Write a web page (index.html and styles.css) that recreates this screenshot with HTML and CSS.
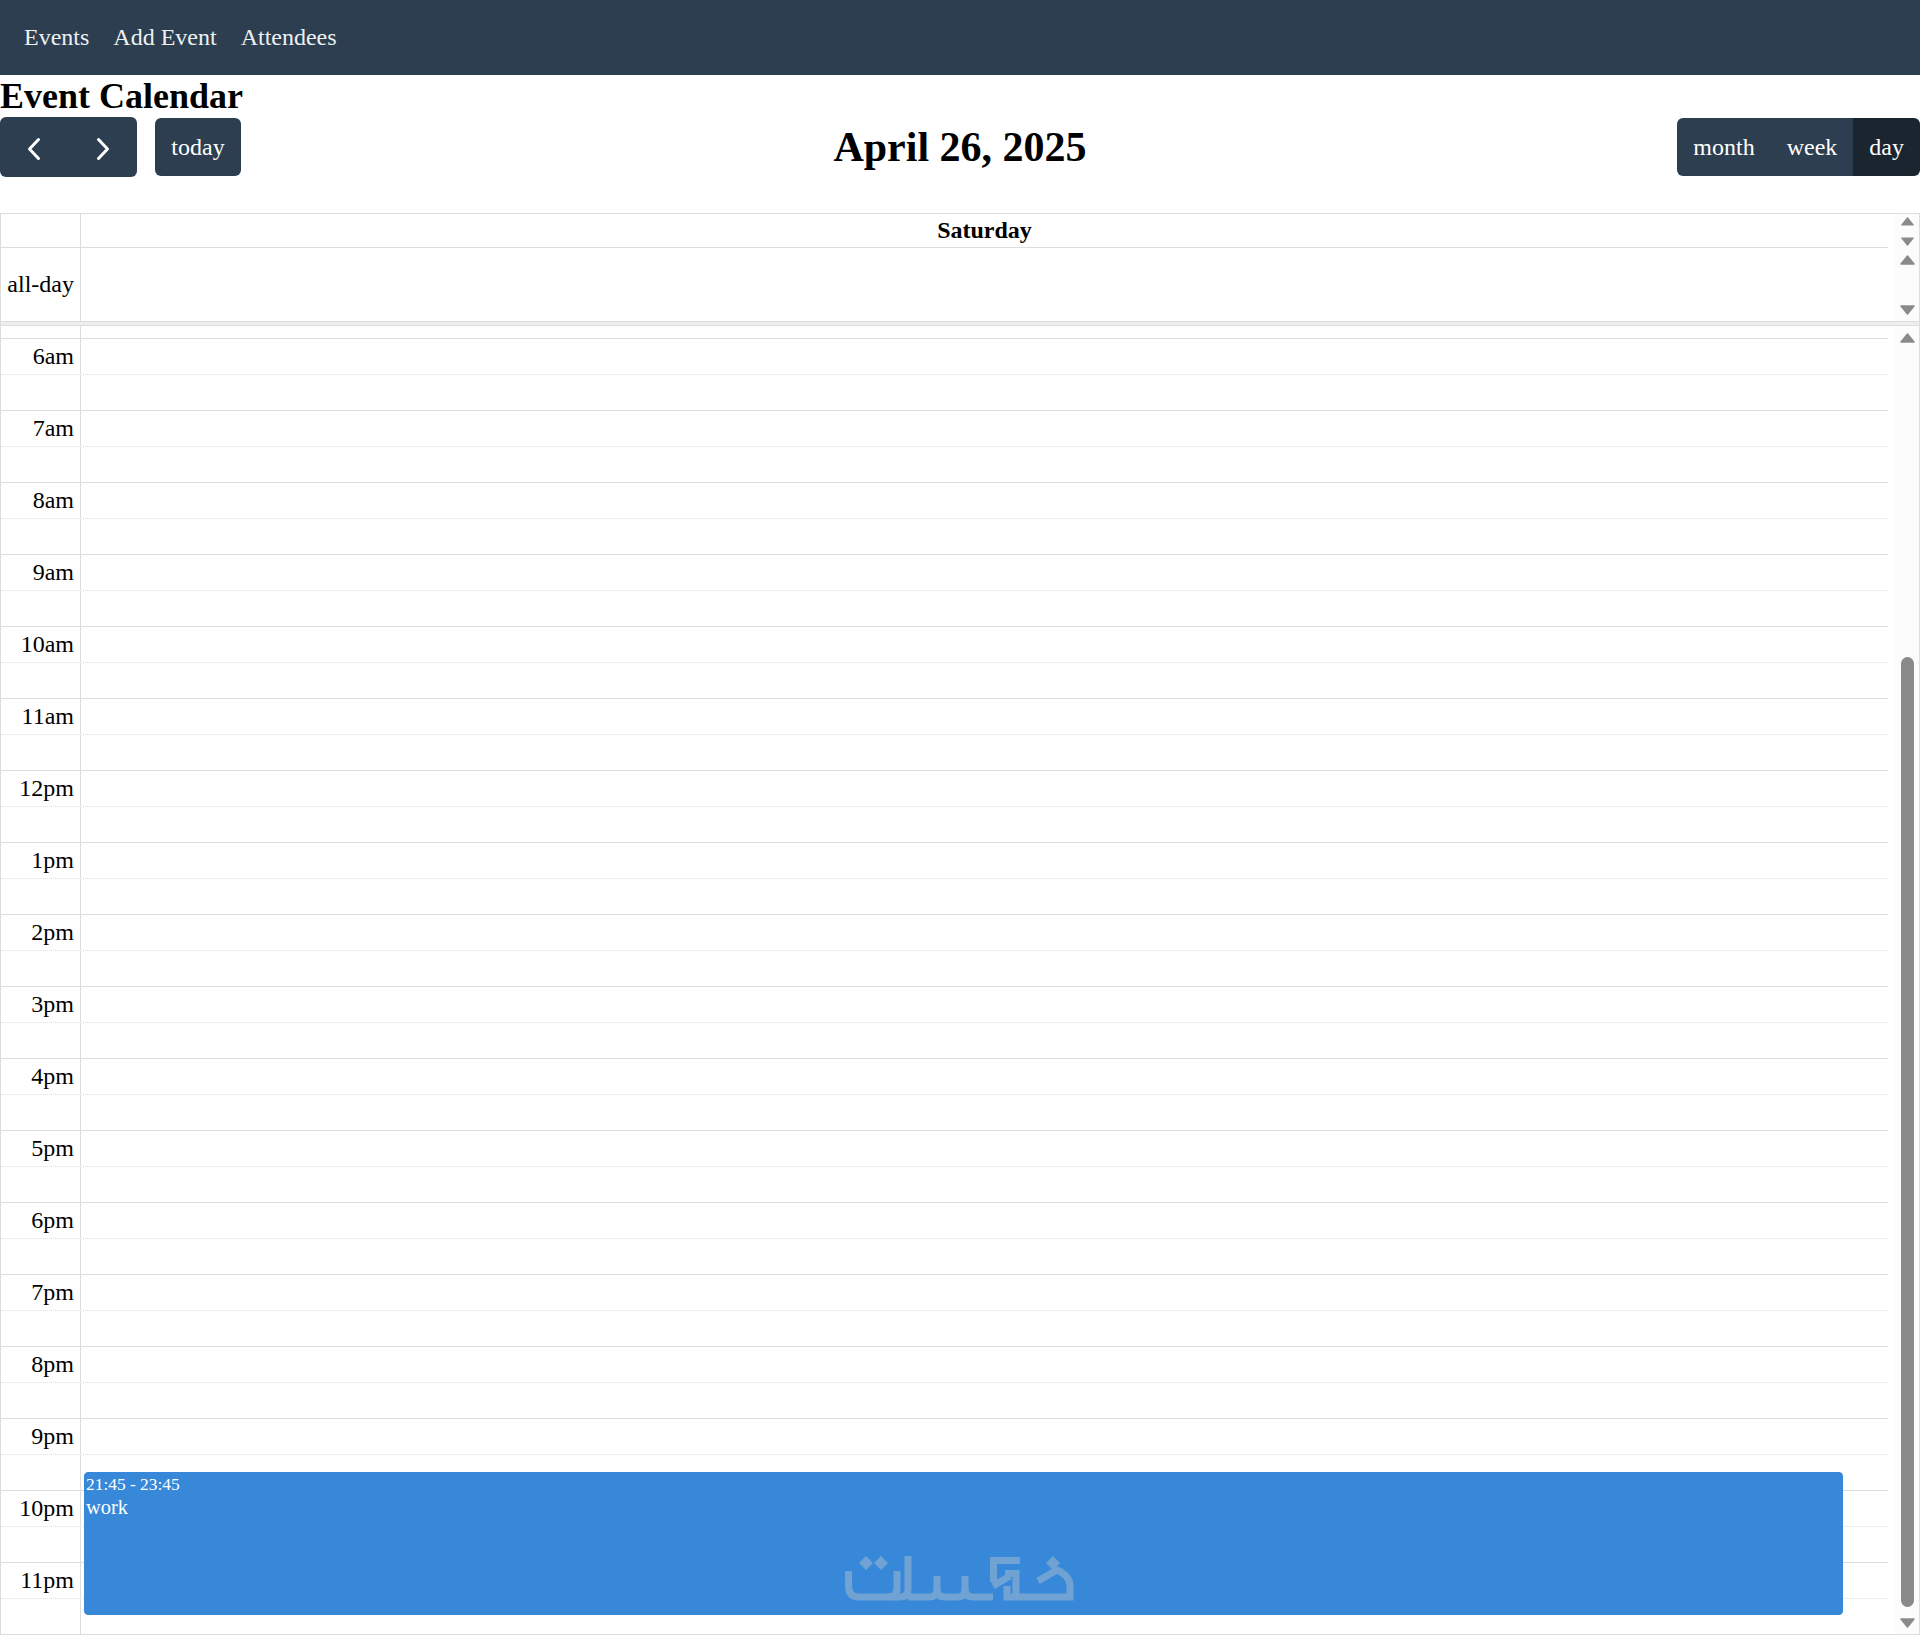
FILE: index.html
```html
<!DOCTYPE html>
<html lang="en">
<head>
<meta charset="utf-8">
<title>Event Calendar</title>
<link rel="stylesheet" href="styles.css">
</head>
<body>
<nav class="nav">
  <a class="nav-link">Events</a>
  <a class="nav-link">Add Event</a>
  <a class="nav-link">Attendees</a>
</nav>
<h1 class="page-title">Event Calendar</h1>
<div class="toolbar">
  <div class="tb-left">
    <div class="btn-group arrows">
      <button class="btn arrow"><svg class="chev" width="16" height="26" viewBox="0 0 16 26"><path d="M12.5 3.5 3.500 13l9 9.500" fill="none" stroke="#fff" stroke-width="3" stroke-linecap="round" stroke-linejoin="round"/></svg></button>
      <button class="btn arrow"><svg class="chev" width="16" height="26" viewBox="0 0 16 26"><path d="M3.500 3.500l9 9.500-9 9.500" fill="none" stroke="#fff" stroke-width="3" stroke-linecap="round" stroke-linejoin="round"/></svg></button>
    </div>
    <button class="btn today">today</button>
  </div>
  <h2 class="cal-title">April 26, 2025</h2>
  <div class="btn-group views">
    <button class="btn view">month</button>
    <button class="btn view">week</button>
    <button class="btn view active">day</button>
  </div>
</div>
<div class="calendar">
  <div class="head-row">
    <div class="head-main">
      <div class="axis"></div>
      <div class="day-name">Saturday</div>
    </div>
    <div class="sb small">
      <svg class="tri sm" viewBox="0 0 15 10"><path d="M7.500 1 14 9H1Z"/></svg>
      <svg class="tri sm" viewBox="0 0 15 10"><path d="M1 1H14L7.500 9Z"/></svg>
    </div>
  </div>
  <div class="allday-row">
    <div class="head-main">
      <div class="axis allday-label">all-day</div>
      <div class="day-cell"></div>
    </div>
    <div class="sb tall">
      <svg class="tri" viewBox="0 0 15 10"><path d="M7.500 1 14 9H1Z"/></svg>
      <svg class="tri" viewBox="0 0 15 10"><path d="M1 1H14L7.500 9Z"/></svg>
    </div>
  </div>
  <div class="divider"></div>
  <div class="time-area">
    <div class="slots">
      <div class="stub"><div class="axis"></div><div class="day-cell"></div></div>
      <div id="rows"></div>
      <div class="event">
        <div class="event-time">21:45 - 23:45</div>
        <div class="event-title">work</div>
      </div>
    </div>
    <div class="sb main">
      <svg class="tri" viewBox="0 0 15 10"><path d="M7.500 1 14 9H1Z"/></svg>
      <div class="track"><div class="thumb"></div></div>
      <svg class="tri" viewBox="0 0 15 10"><path d="M1 1H14L7.500 9Z"/></svg>
    </div>
  </div>
</div>
<svg class="watermark" width="232" height="50" viewBox="0 0 232 50" aria-hidden="true">
  <g fill="none" stroke="#70a2d3" stroke-width="7">
    <path d="M3.500 15V30Q3.500 41 14 41H55Q63 41 63 33V0"/>
    <path d="M52 15V32Q52 41 43 41"/>
    <path d="M63 41H84Q92 41 92 33V20"/>
    <path d="M92 33Q92 41 100 41H112Q120 41 120 33V20"/>
    <path d="M120 33Q120 41 128 41H148"/>
    <path d="M145 4.500H175M148.500 1V26M160 17.500H171V41M165 20L148 30M162 30V44.500"/>
    <path d="M193 25L212 14Q225 20 225 30V41H165"/>
  </g>
  <g fill="#70a2d3">
    <path d="M14 7l7-7 7 7-7 7zM29 7l7-7 7 7-7 7zM201 7l7-7 7 7-7 7z"/>
  </g>
</svg>
<script src="rows.js"></script>
</body>
</html>
```
FILE: rows.js
```js
var labels = ["6am","7am","8am","9am","10am","11am","12pm","1pm","2pm","3pm","4pm","5pm","6pm","7pm","8pm","9pm","10pm","11pm"];
var html = "";
labels.forEach(function (l) {
  html += '<div class="slot major"><div class="axis time">' + l + '</div><div class="day-cell"></div></div>';
  html += '<div class="slot minor"><div class="axis"></div><div class="day-cell"></div></div>';
});
document.getElementById("rows").innerHTML = html;
```
FILE: styles.css
```css
* { box-sizing: border-box; }
html, body { margin: 0; padding: 0; }
body {
  font-family: "Liberation Serif", "Times New Roman", serif;
  color: #000;
  background: #fff;
  width: 1920px;
  height: 1635px;
  overflow: hidden;
  position: relative;
}
.nav {
  height: 75px;
  background: #2c3e50;
  display: flex;
  align-items: center;
  padding-left: 24px;
  gap: 24px;
}
.nav-link { color: #ecf0f1; font-size: 24px; }
.page-title {
  margin: 0;
  height: 42px;
  font-size: 36px;
  line-height: 42px;
  font-weight: 700;
}
.toolbar {
  display: flex;
  justify-content: space-between;
  align-items: center;
  height: 60px;
  margin-bottom: 36px;
  position: relative;
}
.tb-left { display: flex; align-items: center; gap: 18px; }
.btn-group { display: flex; border-radius: 6px; overflow: hidden; }
.btn {
  border: 0;
  margin: 0;
  padding: 0;
  background: #2c3e50;
  color: #fff;
  font-family: inherit;
  font-size: 24px;
  display: flex;
  align-items: center;
  justify-content: center;
}
.arrows { height: 60px; width: 137px; }
.arrow { width: 68.5px; }
.chev { margin-top: 3px; }
.today { width: 86px; height: 58px; border-radius: 6px; }
.cal-title {
  margin: 0;
  position: absolute;
  left: 0;
  right: 0;
  text-align: center;
  font-size: 42px;
  font-weight: 700;
  line-height: 60px;
}
.views { height: 58px; }
.view { height: 58px; padding: 0 16px; }
.view.active { background: #1a252f; }
.calendar {
  height: 1422px;
  border: 1px solid #ddd;
  display: flex;
  flex-direction: column;
}
.head-row { height: 34px; display: flex; }
.allday-row { height: 73px; display: flex; }
.head-main { flex: 1; display: flex; border-bottom: 1px solid #ddd; min-width: 0; }
.allday-row .head-main { border-bottom: 0; }
.axis { width: 80px; flex: none; border-right: 1px solid #ddd; }
.day-name {
  flex: 1;
  text-align: center;
  font-weight: 700;
  font-size: 24px;
  line-height: 33px;
}
.day-cell { flex: 1; }
.allday-label {
  font-size: 24px;
  line-height: 72px;
  text-align: right;
  padding-right: 6px;
}
.divider {
  height: 5px;
  background: #eee;
  border-top: 1px solid #ddd;
  border-bottom: 1px solid #ddd;
  flex: none;
}
.time-area { flex: 1; display: flex; min-height: 0; }
.slots { flex: 1; position: relative; min-width: 0; }
.stub { height: 13px; display: flex; border-bottom: 1px solid #ddd; }
.slot { height: 36px; display: flex; }
.slot.major { border-bottom: 1px dotted #ddd; }
.slot.minor { border-bottom: 1px solid #ddd; }
.slot:last-child { border-bottom: 0; height: 35px; }
.time {
  font-size: 24px;
  line-height: 35px;
  text-align: right;
  padding-right: 6px;
  white-space: nowrap;
}
.event {
  position: absolute;
  left: 83px;
  right: 45px;
  top: 1146px;
  height: 143px;
  background: #3788d8;
  border: 1px solid #3788d8;
  border-radius: 4px;
  color: #fff;
  padding-left: 1px;
}
.event-time { font-size: 17.400px; line-height: 20px; margin-top: 1px; }
.event-title { font-size: 20.400px; line-height: 26px; }
.sb {
  width: 31px;
  flex: none;
  background: #fcfcfc;
  border-left: 7px solid #fff;
  display: flex;
  flex-direction: column;
  align-items: center;
  justify-content: space-between;
}
.sb.small { padding: 3px 0 2px; }
.sb.tall { padding: 7px 0 6px; }
.sb.main { padding: 7px 0 6px; }
.tri { display: block; width: 15px; height: 10px; flex: none; fill: #8a8a8a; stroke: #8a8a8a; stroke-width: 1.500; stroke-linejoin: round; }
.tri.sm { width: 13px; height: 9px; }
.track { flex: 1; width: 100%; display: flex; flex-direction: column; justify-content: flex-end; padding-bottom: 11px; }
.thumb { width: 13px; height: 950px; margin: 0 auto; background: #8a8a8a; border-radius: 7px; }
.watermark { position: absolute; left: 845px; top: 1556px; pointer-events: none; }
```
